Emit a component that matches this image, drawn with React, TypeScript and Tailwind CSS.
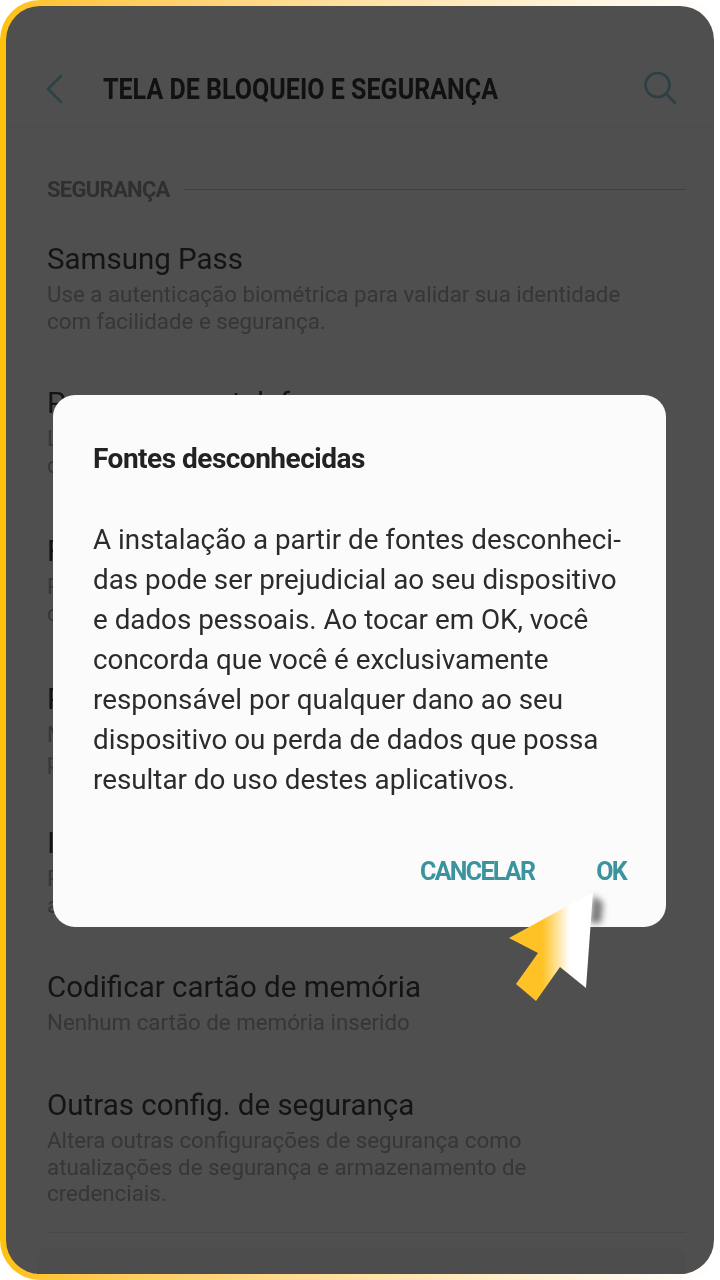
const rows = [
  { title: 'Samsung Pass', sub: ['Use a autenticação biométrica para validar sua identidade', 'com facilidade e segurança.'], cls: 'h-[144px]' },
  { title: 'Procurar meu telefone', sub: ['Localize e controle seu', 'dispositivo remotamente.'], cls: 'h-[148px]' },
  { title: 'Fontes', sub: ['Permitir a instalação', 'de aplicativos.'], cls: 'h-[148px]' },
  { title: 'Pasta segura', sub: ['Mantenha seus arquivos', 'privados protegidos.'], cls: 'h-[144px]' },
  { title: 'Inicialização', sub: ['Proteja seu dispositivo', 'ao ligá-lo.'], cls: 'h-[144px]' },
  { title: 'Codificar cartão de memória', sub: ['Nenhum cartão de memória inserido'], cls: 'h-[118px]' },
  { title: 'Outras config. de segurança', sub: ['Altera outras configurações de segurança como', 'atualizações de segurança e armazenamento de', 'credenciais.'], cls: 'h-[145px]' },
]

const body = [
  'A instalação a partir de fontes desconheci-',
  'das pode ser prejudicial ao seu dispositivo',
  'e dados pessoais. Ao tocar em OK, você',
  'concorda que você é exclusivamente',
  'responsável por qualquer dano ao seu',
  'dispositivo ou perda de dados que possa',
  'resultar do uso destes aplicativos.',
]

export default function App() {
  return (
    <div className="relative w-[720px] h-[1280px] overflow-hidden bg-white font-['Roboto',sans-serif]">
      <div className="h-full rounded-[40px] bg-gradient-to-r from-[#ffc107] to-[#ffffff] p-[6px]">
        <div className="h-full rounded-[34px] overflow-hidden bg-[#4f4f4f] flex flex-col">
          <div className="h-[122px] shrink-0 flex items-center pl-[34px] pr-[34px] pt-[44px] border-b border-[#4c4c4c]">
            <svg width="28" height="30" viewBox="0 0 28 30" fill="none" className="shrink-0 blur-[0.4px]">
              <path d="M21 2 L8 15 L21 28" stroke="#2c4245" strokeWidth="2.8" strokeLinecap="round" strokeLinejoin="round" />
            </svg>
            <div className="ml-[35px] flex-1 min-w-0">
              <h1 className="text-[30px] font-bold text-[#111] whitespace-nowrap origin-left scale-x-[0.835] blur-[0.4px]">TELA DE BLOQUEIO E SEGURANÇA</h1>
            </div>
            <svg width="40" height="40" viewBox="0 0 40 40" fill="none" className="shrink-0 blur-[0.4px]">
              <circle cx="17.5" cy="16" r="12" stroke="#2c4044" strokeWidth="2.6" />
              <path d="M26.5 25 L35 34" stroke="#2c4044" strokeWidth="2.6" strokeLinecap="round" />
            </svg>
          </div>
          <div className="pl-[41px] pr-[28px] pt-[48px] flex items-center gap-[13px]">
            <span className="text-[22px] font-bold text-[#2f2f2f] leading-[28px] tracking-[-0.7px] blur-[0.4px]">SEGURANÇA</span>
            <div className="flex-1 h-px bg-[#404040] -translate-y-[1px]" />
          </div>
          <div className="pl-[41px] pr-[28px] pt-[37px] blur-[0.4px]">
            {rows.map(r => (
              <div key={r.title} className={r.cls}>
                <div className="text-[29.5px] leading-[36px] text-[#141414] whitespace-nowrap">{r.title}</div>
                <div className="mt-[4px] text-[22.3px] leading-[26.5px] text-[#363636] whitespace-nowrap">
                  {r.sub.map(s => <div key={s}>{s}</div>)}
                </div>
              </div>
            ))}
          </div>
          <div className="ml-[41px] mr-[28px] h-px bg-[#484848] shrink-0" />
          <div className="ml-[31px] mr-[28px] mt-[15px] flex-1 rounded-t-[12px] bg-[#4d4d4d]" />
        </div>
      </div>

      <div className="absolute left-[53px] top-[395px] w-[613px] h-[532px] rounded-[22px] bg-[#fbfbfb] pl-[40px] pr-[30px] pt-[46px]">
        <h2 className="text-[28px] leading-[36px] font-bold text-[#222] tracking-[-0.5px] blur-[0.3px]">Fontes desconhecidas</h2>
        <div className="mt-[43px] text-[27.8px] leading-[40px] text-[#2b2b2b] whitespace-nowrap blur-[0.3px]">
          {body.map(l => <div key={l}>{l}</div>)}
        </div>
        <div className="mt-[56px] flex justify-end gap-[62px] pr-[10px] text-[25px] leading-[32px] font-bold tracking-[-1.7px] text-[#3b939e] blur-[0.3px]">
          <span>CANCELAR</span>
          <span>OK</span>
        </div>
      </div>

      {/* cursor */}
      <svg className="absolute left-[500px] top-[885px]" width="120" height="125" viewBox="0 0 120 125">
        <defs>
          <linearGradient id="cur" x1="0" y1="0" x2="1" y2="0">
            <stop offset="0.4" stopColor="#ffc226" />
            <stop offset="0.72" stopColor="#ffffff" />
          </linearGradient>
        </defs>
        <path d="M93 10 L103 18 L101 38 L90 38 Z" fill="#777" className="blur-[3px]" />
        <path d="M93 7 L9 53 L38 68 L16 99 L36 116 L60 82 L86 103 Z" fill="url(#cur)" />
      </svg>
    </div>
  )
}
